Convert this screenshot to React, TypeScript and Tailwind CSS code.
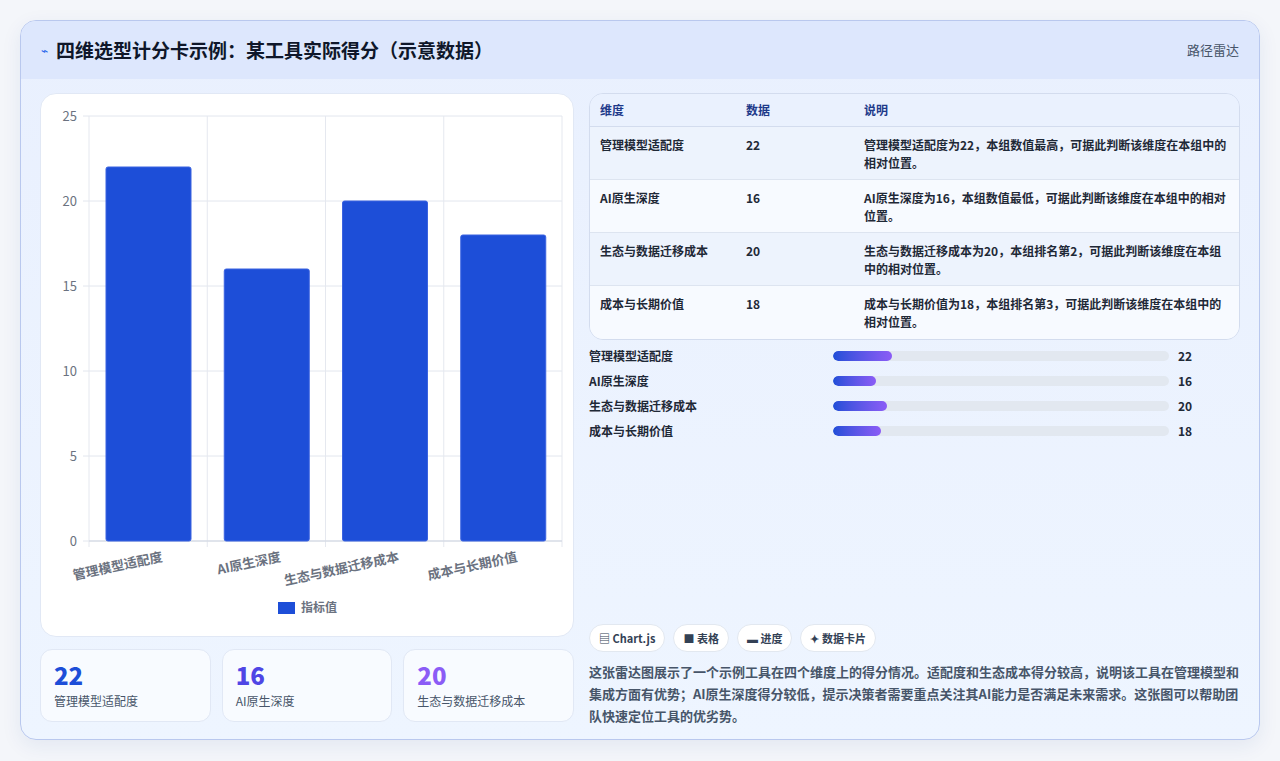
import React from "react";

const data = [
  { name: "管理模型适配度", v: 22, desc: "管理模型适配度为22，本组数值最高，可据此判断该维度在本组中的相对位置。" },
  { name: "AI原生深度", v: 16, desc: "AI原生深度为16，本组数值最低，可据此判断该维度在本组中的相对位置。" },
  { name: "生态与数据迁移成本", v: 20, desc: "生态与数据迁移成本为20，本组排名第2，可据此判断该维度在本组中的相对位置。" },
  { name: "成本与长期价值", v: 18, desc: "成本与长期价值为18，本组排名第3，可据此判断该维度在本组中的相对位置。" },
];

function Chart() {
  // svg coords relative to card at (40,93)
  const x0 = 48, x1 = 521, y0 = 447, unit = 17;
  const cw = (x1 - x0) / 4;
  return (
    <svg width="533" height="542" className="block">
      {[0, 5, 10, 15, 20, 25].map((t) => (
        <g key={t}>
          <line x1={x0 - 6} x2={x1} y1={y0 - t * unit} y2={y0 - t * unit} stroke="#e2e6ee" />
          <text x={x0 - 12} y={y0 - t * unit + 5} textAnchor="end" fontSize="13" fill="#6b7280">{t}</text>
        </g>
      ))}
      {[0, 1, 2, 3, 4].map((i) => (
        <line key={i} x1={x0 + i * cw} x2={x0 + i * cw} y1={y0 - 25 * unit} y2={y0 + 6} stroke="#e5e8ef" />
      ))}
      <line x1={x0} x2={x1} y1={y0} y2={y0} stroke="#cfd5e0" />
      {data.map((d, i) => {
        const bx = x0 + i * cw + 17;
        const h = d.v * unit;
        return <rect key={i} x={bx} y={y0 - h} width={85} height={h} rx="2" fill="#1d4ed8" stroke="#3b63e0" />;
      })}
      {data.map((d, i) => {
        const cx = x0 + i * cw + cw / 2;
        return (
          <text key={i} x={cx + 15} y={y0 + 20} textAnchor="end" fontSize="13" fontWeight="700" fill="#6b7280" transform={`rotate(-12 ${cx + 15} ${y0 + 20})`}>{d.name}</text>
        );
      })}
      <rect x="237" y="508" width="17" height="12" fill="#1d4ed8" />
      <text x="260" y="518" fontSize="12" fontWeight="700" fill="#6b7280">指标值</text>
    </svg>
  );
}

export default function App() {
  const font = { fontFamily: '"Noto Sans CJK SC", "Noto Sans", sans-serif' };
  return (
    <div className="w-[1280px] h-[761px] bg-[#f4f6fa] pt-[20px] px-[20px]" style={font}>
      <div className="w-[1240px] h-[720px] rounded-[16px] border border-[#b9c8ee] overflow-hidden bg-gradient-to-b from-[#e9f0fe] to-[#eef5ff] shadow-[0_6px_20px_rgba(30,60,140,0.08)]">
        <div className="h-[58px] bg-[#dde7fd] flex items-center justify-between px-[20px]">
          <div className="flex items-center gap-[8px]">
            <span className="text-[#2563eb] text-[12px]">⌁</span>
            <span className="text-[19px] font-bold text-[#0f172a]">四维选型计分卡示例：某工具实际得分（示意数据）</span>
          </div>
          <span className="text-[13px] text-[#475569]">路径雷达</span>
        </div>
        <div className="flex gap-[15px] px-[19px] pt-[14px]">
          <div className="w-[534px] flex flex-col gap-[12px]">
            <div className="h-[544px] bg-white rounded-[16px] border border-[#e1e8f5]">
              <Chart />
            </div>
            <div className="flex gap-[11px]">
              {[
                { v: 22, c: "text-[#1d4ed8]", n: "管理模型适配度" },
                { v: 16, c: "text-[#4f46e5]", n: "AI原生深度" },
                { v: 20, c: "text-[#8b5cf6]", n: "生态与数据迁移成本" },
              ].map((s) => (
                <div key={s.v} className="flex-1 h-[73px] bg-[#f8fbff] rounded-[12px] border border-[#e1e8f5] px-[13px] pt-[10px]">
                  <div className={`text-[24px] font-extrabold leading-[30px] ${s.c}`}>{s.v}</div>
                  <div className="text-[12px] text-[#475569] mt-[2px]">{s.n}</div>
                </div>
              ))}
            </div>
          </div>
          <div className="w-[653px] flex flex-col">
            <div className="rounded-[14px] border border-[#d3dcee] overflow-hidden text-[12px] font-bold text-[#1f2937]">
              <div className="h-[33px] flex items-center bg-[#eaf1fe] border-b border-[#d3dcee] text-[#1e3a8a]">
                <div className="w-[156px] pl-[10px]">维度</div>
                <div className="w-[118px]">数据</div>
                <div className="flex-1">说明</div>
              </div>
              {data.map((d, i) => (
                <div key={i} className={`h-[53px] flex pt-[9px] leading-[18px] ${i % 2 === 0 ? "bg-[#edf3fd]" : "bg-[#f7faff]"} ${i < 3 ? "border-b border-[#dde4f0]" : ""}`}>
                  <div className="w-[156px] pl-[10px]">{d.name}</div>
                  <div className="w-[118px]">{d.v}</div>
                  <div className="flex-1 pr-[10px]">{d.desc}</div>
                </div>
              ))}
            </div>
            <div className="mt-[8px] flex flex-col gap-[9px]">
              {data.map((d, i) => (
                <div key={i} className="h-[16px] flex items-center text-[12px] font-bold text-[#1f2937]">
                  <div className="w-[244px]">{d.name}</div>
                  <div className="w-[336px] h-[10px] rounded-full bg-[#e2e8f0] overflow-hidden">
                    <div className="h-full rounded-full bg-gradient-to-r from-[#1d4ed8] to-[#8b5cf6]" style={{ width: `${(d.v / 125) * 100}%` }} />
                  </div>
                  <div className="ml-[9px]">{d.v}</div>
                </div>
              ))}
            </div>
            <div className="flex-1" />
            <div className="flex gap-[8px] mt-[185px]">
              {["▤ Chart.js", "■ 表格", "▬ 进度", "✦ 数据卡片"].map((c) => (
                <span key={c} className="h-[28px] px-[9px] flex items-center rounded-full bg-white border border-[#e2e8f0] text-[11px] font-bold text-[#334155]">{c}</span>
              ))}
            </div>
            <p className="mt-[9px] text-[13px] leading-[22px] font-bold text-[#475569]">
              这张雷达图展示了一个示例工具在四个维度上的得分情况。适配度和生态成本得分较高，说明该工具在管理模型和集成方面有优势；AI原生深度得分较低，提示决策者需要重点关注其AI能力是否满足未来需求。这张图可以帮助团队快速定位工具的优劣势。
            </p>
          </div>
        </div>
      </div>
    </div>
  );
}
